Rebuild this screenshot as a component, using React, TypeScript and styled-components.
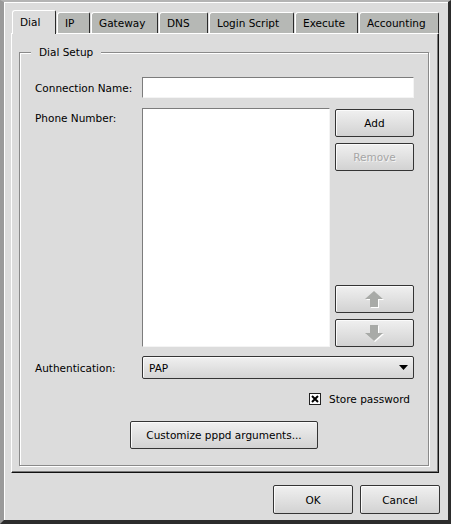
import React from 'react'
import styled, { createGlobalStyle } from 'styled-components'

const GlobalStyle = createGlobalStyle`
  html, body {
    margin: 0;
    padding: 0;
    background: #dcdcdc;
  }
  body {
    font-family: "DejaVu Sans", "Bitstream Vera Sans", sans-serif;
    font-size: 10.5px;
    color: #000;
  }
`

const Window = styled.div`
  width: 451px;
  height: 524px;
  box-sizing: border-box;
  background: #dcdcdc;
  border-top: 2px solid #b4b4b4;
  border-left: 4px solid #9a9a9a;
  border-right: 3px solid #2c2c2c;
  border-bottom: 4px solid #2c2c2c;
  box-shadow: inset 1px 1px 0 #ffffff;
  padding: 8px 9px 0 7px;
  display: flex;
  flex-direction: column;
`

const TabRow = styled.div`
  display: flex;
  align-items: flex-end;
  gap: 1px;
  padding-left: 1px;
  height: 23px;
  position: relative;
  z-index: 1;
`

const Tab = styled.div<{ $active?: boolean; $w: number }>`
  box-sizing: border-box;
  width: ${p => p.$w}px;
  height: ${p => (p.$active ? 24 : 21)}px;
  margin-bottom: ${p => (p.$active ? -1 : 0)}px;
  padding: 0 0 ${p => (p.$active ? 2 : 0)}px 7px;
  background: ${p => (p.$active ? '#dcdcdc' : '#b6b8b5')};
  border-top: 1px solid #ffffff;
  border-left: 1px solid #ffffff;
  border-right: 1px solid #2a2a2a;
  border-radius: 3px 2px 0 0;
  display: flex;
  align-items: center;
  white-space: nowrap;
`

const Panel = styled.div`
  height: 440px;
  box-sizing: border-box;
  border-top: 1px solid #ffffff;
  border-left: 1px solid #ffffff;
  border-right: 1px solid #111111;
  border-bottom: 1px solid #111111;
  box-shadow: inset -1px -1px 0 #7a7a7a;
  display: flex;
  flex-direction: column;
`

const Group = styled.fieldset`
  flex: 1;
  margin: 11px 9px 6px 7px;
  padding: 0;
  border: 1px solid #8a8a8a;
  box-shadow: inset 1px 1px 0 #ffffff, 1px 1px 0 #ffffff;
  min-width: 0;
  display: flex;
  flex-direction: column;
`

const GroupTitle = styled.legend`
  margin-left: 11px;
  padding: 0 8px;
  line-height: 14px;
  background: #dcdcdc;
`

const Form = styled.div`
  padding: 18px 14px 0 15px;
  display: flex;
  flex-direction: column;
`

const FieldRow = styled.div<{ $mt?: number; $top?: boolean }>`
  display: flex;
  align-items: ${p => (p.$top ? 'flex-start' : 'center')};
  margin-top: ${p => p.$mt ?? 0}px;
`

const Label = styled.div<{ $pt?: number }>`
  width: 107px;
  flex: none;
  padding-top: ${p => p.$pt ?? 0}px;
  line-height: 14px;
`

const TextInput = styled.input`
  flex: 1;
  height: 21px;
  box-sizing: border-box;
  border-top: 1px solid #7c7c7c;
  border-left: 1px solid #7c7c7c;
  border-right: 1px solid #f4f4f4;
  border-bottom: 1px solid #f4f4f4;
  background: #ffffff;
  font: inherit;
  padding: 0 4px;
  outline: none;
`

const PhoneArea = styled.div`
  flex: 1;
  display: flex;
  gap: 5px;
  height: 239px;
`

const ListBox = styled.div`
  width: 188px;
  box-sizing: border-box;
  border-top: 1px solid #7c7c7c;
  border-left: 1px solid #7c7c7c;
  border-right: 1px solid #f4f4f4;
  border-bottom: 1px solid #f4f4f4;
  background: #ffffff;
`

const SideButtons = styled.div`
  flex: 1;
  display: flex;
  flex-direction: column;
  gap: 6px;
  padding-top: 1px;
`

const Spacer = styled.div`
  flex: 1;
`

const Button = styled.button<{ $w?: number; $h?: number }>`
  width: ${p => (p.$w ? `${p.$w}px` : '100%')};
  height: ${p => p.$h ?? 28}px;
  flex: none;
  box-sizing: border-box;
  border: 1px solid #343434;
  border-radius: 2px;
  background: linear-gradient(#f0f0f0, #d2d2d2);
  box-shadow: inset 1px 1px 0 #fbfbfb;
  font: inherit;
  color: #000;
  padding: 0;
  display: flex;
  align-items: center;
  justify-content: center;

  &:disabled {
    color: #a6a6a6;
    text-shadow: 1px 1px 0 #f4f4f4;
  }
`

const Combo = styled.div`
  flex: 1;
  height: 23px;
  box-sizing: border-box;
  border: 1px solid #343434;
  border-radius: 2px;
  background: linear-gradient(#f0f0f0, #d4d4d4);
  box-shadow: inset 1px 1px 0 #fbfbfb;
  display: flex;
  align-items: center;
  justify-content: space-between;
  padding: 0 5px 0 6px;
`

const CheckRow = styled.label`
  display: flex;
  align-items: center;
  justify-content: flex-end;
  gap: 8px;
  height: 14px;
  margin-top: 13px;
  padding-right: 4px;
`

const CheckBox = styled.span`
  width: 12px;
  height: 12px;
  box-sizing: border-box;
  border: 1px solid #222;
  background: #fff;
  display: flex;
  align-items: center;
  justify-content: center;
`

const CenterRow = styled.div`
  display: flex;
  justify-content: center;
  margin-top: 15px;
  padding-right: 1px;
`

const Footer = styled.div`
  display: flex;
  justify-content: flex-end;
  gap: 7px;
  padding-top: 12px;
  margin-right: -1px;
`

const ArrowUp = () => (
  <svg width="19" height="17" viewBox="0 0 19 17">
    <polygon points="10,1 19,9 14,9 14,17 6,17 6,9 1,9" fill="#ffffff" />
    <polygon points="9,0 18,8 13,8 13,16 5,16 5,8 0,8" fill="#a8aaa7" />
  </svg>
)

const ArrowDown = () => (
  <svg width="19" height="17" viewBox="0 0 19 17">
    <polygon points="6,1 14,1 14,9 19,9 10,17 1,9 6,9" fill="#ffffff" />
    <polygon points="5,0 13,0 13,8 18,8 9,16 0,8 5,8" fill="#a8aaa7" />
  </svg>
)

const tabs: [string, number][] = [
  ['Dial', 44],
  ['IP', 33],
  ['Gateway', 67],
  ['DNS', 49],
  ['Login Script', 85],
  ['Execute', 63],
  ['Accounting', 80],
]

export default function App() {
  return (
    <>
      <GlobalStyle />
      <Window>
        <TabRow>
          {tabs.map(([t, w], i) => (
            <Tab key={t} $w={w} $active={i === 0}>{t}</Tab>
          ))}
        </TabRow>
        <Panel>
          <Group>
            <GroupTitle>Dial Setup</GroupTitle>
            <Form>
              <FieldRow>
                <Label>Connection Name:</Label>
                <TextInput />
              </FieldRow>
              <FieldRow $mt={10} $top>
                <Label $pt={3}>Phone Number:</Label>
                <PhoneArea>
                  <ListBox />
                  <SideButtons>
                    <Button>Add</Button>
                    <Button disabled>Remove</Button>
                    <Spacer />
                    <Button disabled><ArrowUp /></Button>
                    <Button disabled><ArrowDown /></Button>
                  </SideButtons>
                </PhoneArea>
              </FieldRow>
              <FieldRow $mt={9}>
                <Label>Authentication:</Label>
                <Combo>
                  <span>PAP</span>
                  <svg width="9" height="5" viewBox="0 0 9 5">
                    <polygon points="0,0 9,0 4.5,5" fill="#000" />
                  </svg>
                </Combo>
              </FieldRow>
              <CheckRow>
                <CheckBox>
                  <svg width="8" height="8" viewBox="0 0 8 8">
                    <path d="M1 1 L7 7 M7 1 L1 7" stroke="#000" strokeWidth="2" />
                  </svg>
                </CheckBox>
                Store password
              </CheckRow>
              <CenterRow>
                <Button $w={188}>Customize pppd arguments...</Button>
              </CenterRow>
            </Form>
          </Group>
        </Panel>
        <Footer>
          <Button $w={80} $h={29}>OK</Button>
          <Button $w={80} $h={29}>Cancel</Button>
        </Footer>
      </Window>
    </>
  )
}
